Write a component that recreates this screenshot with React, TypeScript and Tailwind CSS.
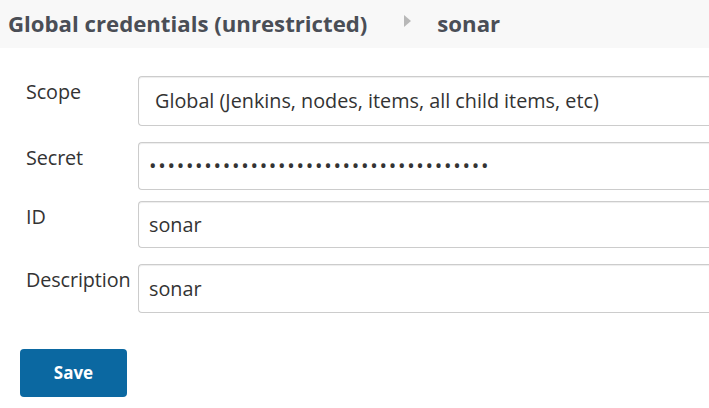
import React from "react";

const font = { fontFamily: '"Open Sans", "Noto Sans", "Liberation Sans", sans-serif' };

function Row({
  label,
  children,
  boxH,
  mt,
}: {
  label: string;
  children: React.ReactNode;
  boxH: string;
  mt: string;
}) {
  return (
    <div className={`flex ${mt}`}>
      <div className="w-[138px] shrink-0 pl-[26px] pt-[2px] text-[19.8px] leading-[28px] text-[#333] tracking-[-0.1px]">
        {label}
      </div>
      <div
        className={`flex-1 ${boxH} flex items-center rounded-l-[4px] border border-r-0 border-[#ccc] shadow-[inset_0_1px_1px_rgba(0,0,0,0.075)] bg-white`}
      >
        {children}
      </div>
    </div>
  );
}

export default function App() {
  return (
    <div className="w-[709px] h-[408px] overflow-hidden bg-white" style={font}>
      <div className="h-[48px] bg-[#f8f8f8] flex items-center pl-[8px]">
        <span className="text-[22.2px] font-bold text-[#4a4e56]">
          Global credentials (unrestricted)
        </span>
        <svg width="8" height="12" viewBox="0 0 8 12" className="ml-[37px] mt-[-6px]">
          <polygon points="0,0 7,6 0,12" fill="#b8b8b8" />
        </svg>
        <span className="ml-[25px] text-[22.2px] font-bold text-[#4a4e56]">sonar</span>
      </div>

      <Row label="Scope" boxH="h-[50px]" mt="mt-[28px]">
        <span className="pl-[16px] text-[19.8px] text-[#333]">
          Global (Jenkins, nodes, items, all child items, etc)
        </span>
      </Row>
      <Row label="Secret" boxH="h-[48px]" mt="mt-[16px]">
        <span className="pl-[10px] text-[20px] tracking-[1.7px] text-[#333]">
          •••••••••••••••••••••••••••••••••••••
        </span>
      </Row>
      <Row label="ID" boxH="h-[47px]" mt="mt-[11px]">
        <span className="pl-[10px] text-[19.8px] text-[#333]">sonar</span>
      </Row>
      <Row label="Description" boxH="h-[49px]" mt="mt-[16px]">
        <span className="pl-[10px] text-[19.8px] text-[#333]">sonar</span>
      </Row>

      <div className="pl-[20px] mt-[36px]">
        <button className="w-[107px] h-[48px] rounded-[4px] bg-[#0b68a1] text-white font-bold text-[17px]">
          Save
        </button>
      </div>
    </div>
  );
}
